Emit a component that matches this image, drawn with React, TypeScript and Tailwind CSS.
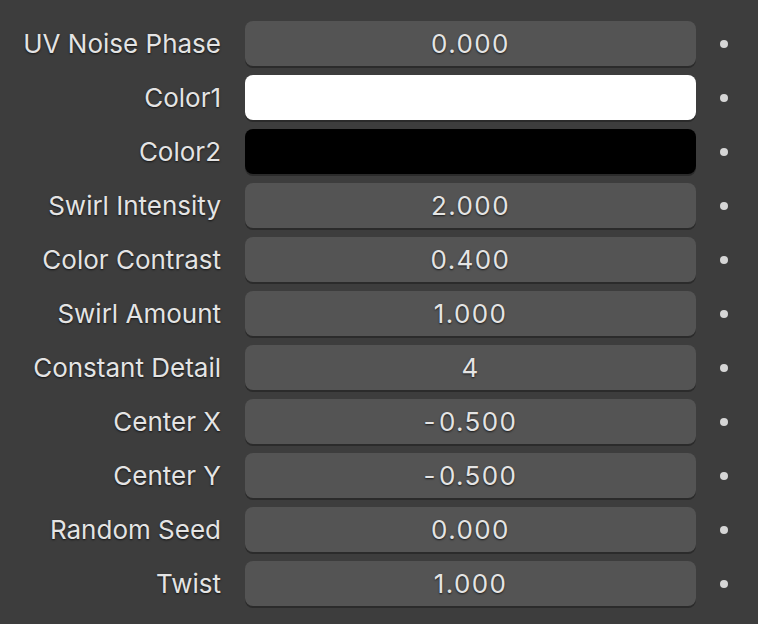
const rows: { label: string; value?: string; color?: string }[] = [
  { label: 'UV Noise Phase', value: '0.000' },
  { label: 'Color1', color: 'white' },
  { label: 'Color2', color: 'black' },
  { label: 'Swirl Intensity', value: '2.000' },
  { label: 'Color Contrast', value: '0.400' },
  { label: 'Swirl Amount', value: '1.000' },
  { label: 'Constant Detail', value: '4' },
  { label: 'Center X', value: '-0.500' },
  { label: 'Center Y', value: '-0.500' },
  { label: 'Random Seed', value: '0.000' },
  { label: 'Twist', value: '1.000' },
]

function Value({ v }: { v: string }) {
  if (v.startsWith('-')) {
    return (
      <span>
        <span className="mr-[2px]">-</span>
        {v.slice(1)}
      </span>
    )
  }
  return <span>{v}</span>
}

export default function App() {
  return (
    <div className="w-[758px] h-[624px] bg-[#3d3d3d] pt-[21px] font-['Inter','Noto_Sans',sans-serif] text-[26px] text-[#e4e4e4] [text-shadow:0_1px_2px_rgba(0,0,0,0.7)]">
      <div className="flex flex-col gap-[9px]">
        {rows.map((r) => (
          <div key={r.label} className="flex items-center h-[45px]">
            <div className="w-[221px] text-right leading-none">{r.label}</div>
            <div
              className={`ml-[24px] w-[451px] h-[45px] rounded-[8px] flex items-center justify-center leading-none tracking-[1.4px] shadow-[0_2px_0_#2b2b2b] ${
                r.color === 'white'
                  ? 'bg-white'
                  : r.color === 'black'
                    ? 'bg-black'
                    : 'bg-[#545454]'
              }`}
            >
              {r.value && <Value v={r.value} />}
            </div>
            <div className="ml-[24px] w-[8px] h-[8px] rounded-full bg-[#d6d6d6]" />
          </div>
        ))}
      </div>
    </div>
  )
}
